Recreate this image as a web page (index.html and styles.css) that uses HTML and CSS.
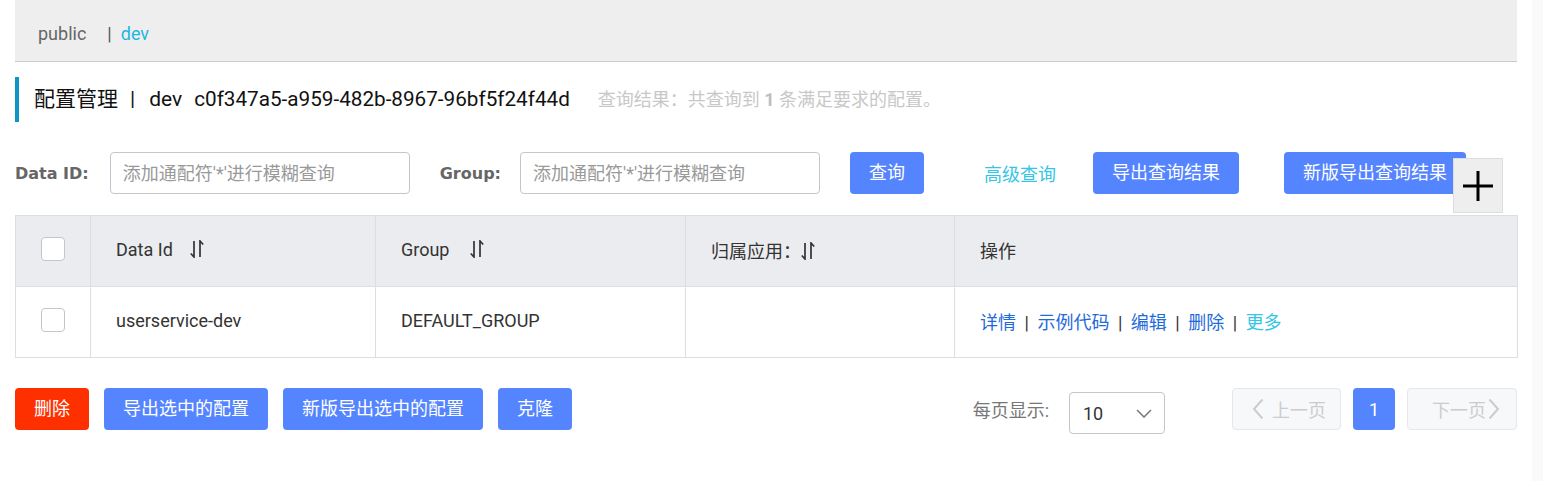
FILE: index.html
```html
<!DOCTYPE html>
<html lang="zh-CN">
<head>
<meta charset="utf-8">
<title>配置管理</title>
<link rel="stylesheet" href="styles.css">
</head>
<body>
<div class="app">
  <div class="main">
    <div class="ns-bar">
      <span class="ns">public</span><span class="ns-sep">|</span><span class="ns ns-active">dev</span>
    </div>

    <div class="page-title">
      <span class="title-main">配置管理</span><span class="title-sep">|</span><span class="title-ns">dev</span><span class="title-id">c0f347a5-a959-482b-8967-96bf5f24f44d</span><span class="title-result">查询结果：共查询到 <b>1</b> 条满足要求的配置。</span>
    </div>

    <div class="search-bar">
      <label class="field-label label-data">Data ID:</label>
      <input class="field-input" type="text" placeholder="添加通配符'*'进行模糊查询">
      <label class="field-label label-group">Group:</label>
      <input class="field-input" type="text" placeholder="添加通配符'*'进行模糊查询">
      <button class="btn btn-primary btn-query">查询</button>
      <a class="link-adv">高级查询</a>
      <button class="btn btn-primary btn-export">导出查询结果</button>
      <button class="btn btn-primary btn-export-new">新版导出查询结果</button>
      <div class="add-box">
        <svg width="32" height="32" viewBox="0 0 32 32"><path d="M1 16H31M16 1V31" stroke="#000" stroke-width="3" fill="none"/></svg>
      </div>
    </div>

    <table class="cfg-table">
      <colgroup>
        <col class="col-check"><col class="col-id"><col class="col-group"><col class="col-app"><col class="col-ops">
      </colgroup>
      <thead>
        <tr>
          <th class="cell-check"><span class="checkbox"></span></th>
          <th>Data Id<svg class="sort sort-id" viewBox="0 0 14 18"><path d="M4 1V17L0.8 13.5M10 17V1L13.2 4.5" stroke="#333" stroke-width="1.7" fill="none"/></svg></th>
          <th>Group<svg class="sort sort-group" viewBox="0 0 14 18"><path d="M4 1V17L0.8 13.5M10 17V1L13.2 4.5" stroke="#333" stroke-width="1.7" fill="none"/></svg></th>
          <th>归属应用：<svg class="sort sort-app" viewBox="0 0 14 18"><path d="M4 1V17L0.8 13.5M10 17V1L13.2 4.5" stroke="#333" stroke-width="1.7" fill="none"/></svg></th>
          <th>操作</th>
        </tr>
      </thead>
      <tbody>
        <tr>
          <td class="cell-check"><span class="checkbox"></span></td>
          <td>userservice-dev</td>
          <td>DEFAULT_GROUP</td>
          <td></td>
          <td class="ops"><a>详情</a><span class="sep">|</span><a>示例代码</a><span class="sep">|</span><a>编辑</a><span class="sep">|</span><a>删除</a><span class="sep">|</span><a class="more">更多</a></td>
        </tr>
      </tbody>
    </table>

    <div class="footer-bar">
      <div class="batch-actions">
        <button class="btn btn-danger">删除</button>
        <button class="btn btn-primary">导出选中的配置</button>
        <button class="btn btn-primary">新版导出选中的配置</button>
        <button class="btn btn-primary">克隆</button>
      </div>
      <div class="pager-area">
        <span class="page-size-label">每页显示:</span>
        <div class="size-select">
          <span>10</span>
          <svg width="16" height="9" viewBox="0 0 16 9"><path d="M1 1L8 8L15 1" stroke="#777" stroke-width="1.5" fill="none"/></svg>
        </div>
        <div class="pager">
          <button class="pg-btn pg-prev"><svg width="12" height="22" viewBox="0 0 12 22"><path d="M10.5 1.5L2 11L10.5 20.5" stroke="#ccc" stroke-width="2" fill="none"/></svg>上一页</button>
          <button class="pg-num">1</button>
          <button class="pg-btn pg-next">下一页<svg width="12" height="22" viewBox="0 0 12 22"><path d="M1.5 1.5L10 11L1.5 20.5" stroke="#ccc" stroke-width="2" fill="none"/></svg></button>
        </div>
      </div>
    </div>
  </div>
  <div class="scroll-track"></div>
</div>
</body>
</html>
```

FILE: styles.css
```css
html, body {
  margin: 0;
  padding: 0;
}

body {
  font-family: Roboto, "Noto Sans CJK SC", sans-serif;
  font-size: 18px;
  color: #333;
  background: #fff;
}

.app {
  display: flex;
  min-height: 100vh;
}

.main {
  flex: 1;
  padding: 0 15px;
  min-width: 0;
}

.scroll-track {
  width: 11px;
  background: #fafafa;
}

/* namespace bar */
.ns-bar {
  height: 62px;
  box-sizing: border-box;
  background: #eee;
  border-bottom: 1px solid #ccc;
  padding: 23px 0 0 23px;
  line-height: 21px;
  white-space: nowrap;
}

.ns {
  color: #666;
}

.ns-sep {
  color: #555;
  margin: 0 9px 0 21px;
}

.ns-active {
  color: #1fb6e0;
}

/* title */
.page-title {
  margin-top: 15px;
  border-left: 4px solid #0e95c8;
  height: 45px;
  line-height: 45px;
  padding-left: 15px;
  white-space: nowrap;
  color: #111;
}

.title-main,
.title-sep,
.title-ns {
  font-size: 21px;
}

.title-id {
  font-size: 20.7px;
  margin-left: 12px;
}

.title-sep {
  margin: 0 14px 0 12px;
}

.title-result {
  margin-left: 28px;
  font-size: 18px;
  color: #c8c8c8;
}

.title-result b {
  color: #bdbdbd;
}

/* search bar */
.search-bar {
  position: relative;
  display: flex;
  align-items: center;
  height: 42px;
  margin-top: 30px;
  white-space: nowrap;
}

.field-label {
  font-family: "DejaVu Sans", sans-serif;
  font-weight: bold;
  font-size: 16px;
  color: #666;
}

.label-data {
  margin-right: 21px;
}

.label-group {
  margin: 0 19px 0 30px;
}

.field-input {
  width: 300px;
  height: 42px;
  box-sizing: border-box;
  border: 1px solid #c4c6cf;
  border-radius: 4px;
  padding: 0 12px;
  font-family: inherit;
  font-size: 18px;
  color: #333;
  outline: none;
  background: #fff;
}

.field-input::placeholder {
  color: #999;
}

.btn {
  height: 42px;
  border: none;
  border-radius: 4px;
  padding: 0 19px;
  font-family: inherit;
  font-size: 18px;
  line-height: 42px;
  color: #fff;
  cursor: pointer;
  white-space: nowrap;
}

.btn-primary {
  background: #5584ff;
}

.btn-danger {
  background: #ff3000;
}

.btn-query {
  margin-left: 30px;
}

.link-adv {
  margin-left: 60px;
  color: #33c5e5;
  cursor: pointer;
}

.btn-export {
  margin-left: 37px;
}

.btn-export-new {
  margin-left: 45px;
}

.add-box {
  position: absolute;
  left: 1438px;
  top: 6px;
  width: 50px;
  height: 55px;
  box-sizing: border-box;
  background: #eee;
  border: 1px solid #ddd;
  display: flex;
  align-items: center;
  justify-content: center;
}

/* table */
.cfg-table {
  width: 100%;
  margin-top: 21px;
  border-collapse: collapse;
  table-layout: fixed;
}

.col-check { width: 75px; }
.col-id { width: 285px; }
.col-group { width: 310px; }
.col-app { width: 269px; }
.col-ops { width: 563px; }

.cfg-table th,
.cfg-table td {
  border: 1px solid #dcdee3;
  height: 67px;
  padding: 0 0 3px 25px;
  text-align: left;
  font-weight: normal;
  font-size: 18px;
  color: #333;
  white-space: nowrap;
}

.cfg-table thead th {
  background: #ebecf0;
}

.cfg-table .cell-check {
  padding: 0 0 3px 0;
  text-align: center;
}

.checkbox {
  display: inline-block;
  width: 24px;
  height: 24px;
  box-sizing: border-box;
  border: 1px solid #c4c6cf;
  border-radius: 4px;
  background: #fff;
  vertical-align: middle;
  margin-bottom: 2px;
}

.sort {
  width: 14px;
  height: 18px;
  vertical-align: -2px;
}

.sort-id { margin-left: 17px; }
.sort-group { margin-left: 21px; }
.sort-app { margin-left: 0; }

.ops a {
  color: #1f6bd9;
  cursor: pointer;
}

.ops .sep {
  margin: 0 8.5px;
  color: #333;
}

.ops .more {
  color: #33c5e5;
}

/* footer */
.footer-bar {
  display: flex;
  justify-content: space-between;
  align-items: flex-start;
  margin-top: 30px;
}

.batch-actions {
  display: flex;
  gap: 15px;
}

.pager-area {
  display: flex;
  align-items: center;
  height: 42px;
}

.page-size-label {
  color: #777;
}

.size-select {
  margin: 8px 0 0 20px;
  width: 96px;
  height: 42px;
  box-sizing: border-box;
  border: 1px solid #c4c6cf;
  border-radius: 4px;
  padding: 0 12px 0 13px;
  display: flex;
  align-items: center;
  justify-content: space-between;
  color: #333;
  background: #fff;
}

.pager {
  display: flex;
  gap: 12px;
  margin-left: 67px;
}

.pg-btn {
  height: 42px;
  box-sizing: border-box;
  border: 1px solid #e6e7eb;
  border-radius: 4px;
  background: #f7f8fa;
  color: #ccc;
  font-family: inherit;
  font-size: 18px;
  display: flex;
  align-items: center;
  white-space: nowrap;
}

.pg-prev {
  width: 109px;
  padding: 0 0 0 19px;
}

.pg-prev svg {
  margin-right: 8px;
}

.pg-next {
  width: 110px;
  padding: 0 0 0 24px;
}

.pg-next svg {
  margin-left: 2px;
}

.pg-num {
  width: 42px;
  height: 42px;
  border: none;
  border-radius: 4px;
  padding: 0;
  background: #5584ff;
  color: #fff;
  font-family: inherit;
  font-size: 18px;
}
```
